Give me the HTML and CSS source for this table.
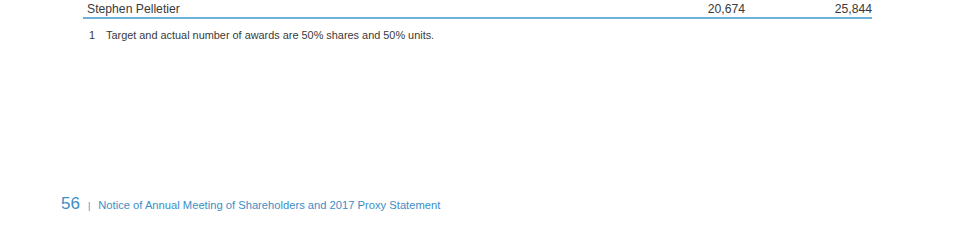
FILE: index.html
```html
<!DOCTYPE html>
<html>
<head>
<meta charset="utf-8">
<link rel="stylesheet" href="styles.css">
</head>
<body>
<div class="page">
  <div class="table">
    <div class="row">
      <span class="name">Stephen Pelletier</span>
      <span class="num num1">20,674</span>
      <span class="num num2">25,844</span>
    </div>
  </div>
  <div class="note"><span class="note-n">1</span><span>Target and actual number of awards are 50% shares and 50% units.</span></div>
  <div class="footer"><span class="pg">56</span><span class="sep">|</span><span class="title">Notice of Annual Meeting of Shareholders and 2017 Proxy Statement</span></div>
</div>
</body>
</html>
```
FILE: styles.css
```css
html, body { margin: 0; padding: 0; background: #fff; }
body { font-family: "Liberation Sans", Arial, sans-serif; color: #3a3a3a; width: 960px; height: 250px; overflow: hidden; }
.page { display: flex; flex-direction: column; }
.table { margin-left: 83px; width: 789px; }
.row { display: flex; align-items: baseline; height: 16px; padding-top: 1px; border-bottom: 2px solid #6eb2da; font-size: 12.2px; line-height: 17px; }
.name { flex: 1; padding-left: 4px; }
.num { text-align: right; }
.num1 { width: 80px; }
.num2 { width: 127px; }
.note { display: flex; margin: 9px 0 0 89px; font-size: 10.9px; line-height: 14px; }
.note-n { width: 17px; }
.footer { display: flex; align-items: baseline; margin: 152px 0 0 61px; color: #3b8ec6; }
.pg { font-size: 17px; }
.sep { font-size: 9px; margin: 0 8px 0 8px; }
.title { font-size: 11.2px; }
```
